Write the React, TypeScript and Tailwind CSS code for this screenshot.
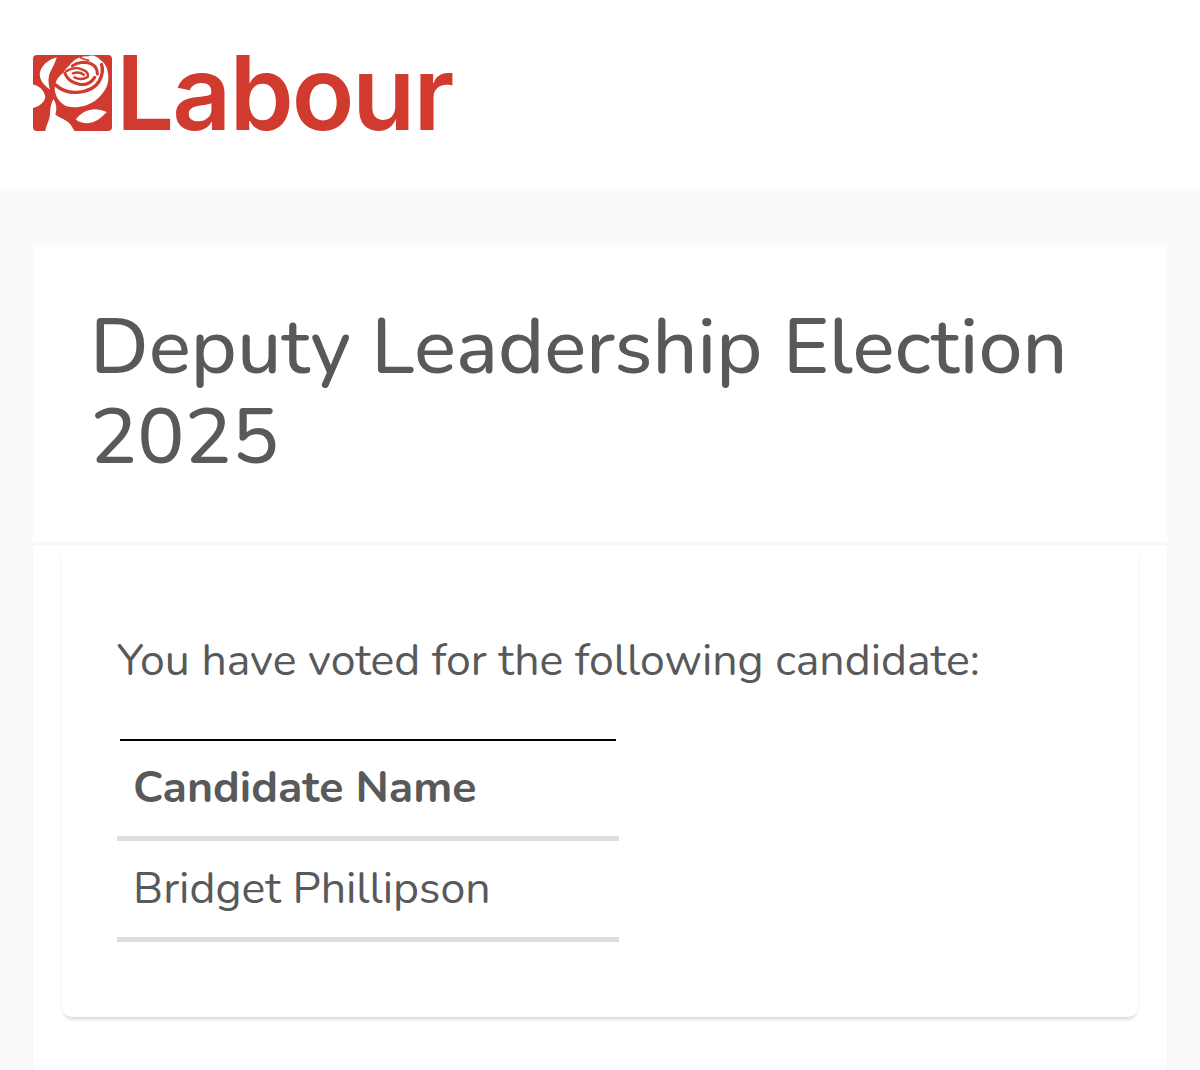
import React from 'react';

const RoseLogo = () => (
  <svg viewBox="42 48 233 224" className="w-[79px] h-[76px] shrink-0" aria-hidden="true">
    <rect x="42" y="48" width="233" height="224" rx="12" fill="#d13a2e" />
    {/* leaves and stem */}
    <path fill="#fff" d="M112 55C88 60 66 78 62 102C60 122 76 138 92 150C86 128 86 108 96 92C102 80 108 68 112 55Z" />
    <path fill="#fff" d="M42 135C58 138 74 150 78 170C78 186 62 198 42 204Z" />
    <path fill="#fff" d="M78 272C82 252 92 238 92 222C92 206 96 190 102 178C110 190 114 204 108 224C120 232 136 238 146 246C154 254 160 262 164 272Z" />
    <path fill="#fff" d="M168 238C180 222 198 210 222 208C236 208 248 212 260 216C248 226 240 238 222 245C204 252 184 250 168 238Z" />
    {/* rose head */}
    <path fill="#fff" d="M150 78C162 62 182 50 204 52C216 46 232 52 240 62C256 72 264 90 264 112C266 138 250 164 226 182C204 198 172 206 144 200C122 192 108 172 106 148C106 130 114 112 132 100C136 92 142 84 150 78Z" />
    <path fill="none" stroke="#d13a2e" strokeWidth="10" strokeLinecap="round" strokeLinejoin="round" d="M108 136C124 150 146 160 172 158C200 156 226 146 238 124C246 108 250 92 244 76" />
    <path fill="none" stroke="#d13a2e" strokeWidth="9" strokeLinecap="round" strokeLinejoin="round" d="M136 102C142 118 156 130 178 134C198 138 214 130 224 114M158 80C172 70 196 66 214 74C226 80 232 92 232 104" />
    <path fill="none" stroke="#d13a2e" strokeWidth="7" strokeLinecap="round" strokeLinejoin="round" d="M140 96C152 88 170 84 186 90C198 94 206 102 204 112C192 120 176 120 164 114M160 102C172 98 184 100 192 106" />
    <path fill="none" stroke="#d13a2e" strokeWidth="5" strokeLinecap="round" d="M182 56C190 60 196 62 206 64" />
  </svg>
);

export default function App() {
  return (
    <div className="h-[1070px] overflow-hidden bg-[#fafafa] text-[#58595b] font-['Nunito','Lato','Open_Sans',sans-serif]">
      <header className="h-[189px] bg-white pl-[33px] pt-[55px]">
        <div className="flex items-start">
          <RoseLogo />
          <span className="ml-[4px] font-['Inter',sans-serif] font-semibold text-[103px] leading-[76px] tracking-[-2px] text-[#d13a2e]">
            Labour
          </span>
        </div>
      </header>

      <main className="px-[33px] pt-[56px]">
        <section className="h-[296px] bg-white pl-[57px] pr-[60px] pt-[57px]">
          <h1 className="text-[78.7px] leading-[90px] font-medium">Deputy Leadership Election 2025</h1>
        </section>

        <section className="mt-[4px] h-[600px] bg-white px-[29px] shadow-[0_0_4px_rgba(0,0,0,0.035)]">
          <div className="h-[472px] rounded-b-[10px] bg-white pl-[55px] pt-[86px] shadow-[0_4px_4px_-2px_rgba(0,0,0,0.18)]">
            <p className="text-[44.6px] leading-[60px]">You have voted for the following candidate:</p>
            <div className="mt-[48px] w-[502px]">
              <div className="mx-[3px] h-[2px] bg-black" />
              <div className="h-[95px] pl-[16px] pt-[18px] text-[44.6px] leading-[58px] font-bold">Candidate Name</div>
              <div className="h-[5px] bg-[#dfdfdf]" />
              <div className="h-[96px] pl-[16px] pt-[19px] text-[44.6px] leading-[58px]">Bridget Phillipson</div>
              <div className="h-[5px] bg-[#dfdfdf]" />
            </div>
          </div>
        </section>
      </main>
    </div>
  );
}
